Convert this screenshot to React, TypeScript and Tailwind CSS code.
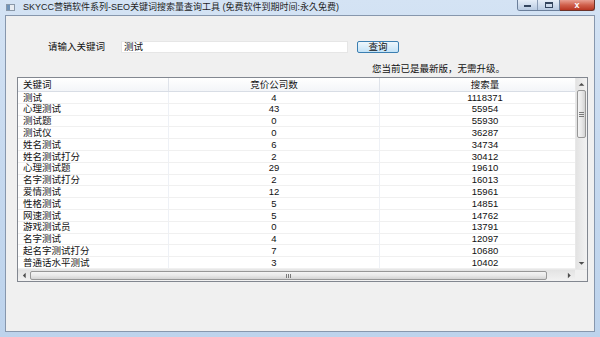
import React from 'react';

const rows: [string, string, string][] = [
  ['测试', '4', '1118371'],
  ['心理测试', '43', '55954'],
  ['测试题', '0', '55930'],
  ['测试仪', '0', '36287'],
  ['姓名测试', '6', '34734'],
  ['姓名测试打分', '2', '30412'],
  ['心理测试题', '29', '19610'],
  ['名字测试打分', '2', '16013'],
  ['爱情测试', '12', '15961'],
  ['性格测试', '5', '14851'],
  ['网速测试', '5', '14762'],
  ['游戏测试员', '0', '13791'],
  ['名字测试', '4', '12097'],
  ['起名字测试打分', '7', '10680'],
  ['普通话水平测试', '3', '10402'],
];

function Arrow({ dir }: { dir: 'up' | 'down' | 'left' | 'right' }) {
  const pts = {
    up: '0,4 3.5,0.5 7,4',
    down: '0,0.5 3.5,4 7,0.5',
    left: '4,0 0.5,3.5 4,7',
    right: '0.5,0 4,3.5 0.5,7',
  }[dir];
  const vertical = dir === 'up' || dir === 'down';
  return (
    <svg width={vertical ? 7 : 5} height={vertical ? 5 : 7} viewBox={vertical ? '0 0 7 5' : '0 0 5 7'}>
      <polygon points={pts} fill="#4d4d4d" transform={vertical ? 'scale(0.8) translate(0.9,0.6)' : 'scale(0.8) translate(0.6,0.9)'} />
    </svg>
  );
}

function VScrollbar() {
  return (
    <div className="w-[12px] flex flex-col bg-gradient-to-r from-[#e3e3e3] to-[#f2f2f2] border-l border-[#e8e8e8]">
      <div className="h-[12px] flex items-center justify-center">
        <Arrow dir="up" />
      </div>
      <div className="h-[48px] mx-[1px] rounded-[2px] border border-[#979797] bg-gradient-to-r from-[#f4f4f4] via-[#e9e9e9] to-[#d3d3d3] flex flex-col items-center justify-center gap-[1px]">
        <div className="w-[5px] h-px bg-[#7a7a7a]" />
        <div className="w-[5px] h-px bg-[#7a7a7a]" />
        <div className="w-[5px] h-px bg-[#7a7a7a]" />
      </div>
      <div className="flex-1" />
      <div className="h-[12px] flex items-center justify-center">
        <Arrow dir="down" />
      </div>
    </div>
  );
}

function HScrollbar() {
  return (
    <div className="h-[12px] flex bg-gradient-to-b from-[#e3e3e3] to-[#f2f2f2] border-t border-[#e8e8e8]">
      <div className="w-[12px] flex items-center justify-center">
        <Arrow dir="left" />
      </div>
      <div className="w-[517px] my-[1px] rounded-[2px] border border-[#979797] bg-gradient-to-b from-[#f4f4f4] via-[#e9e9e9] to-[#d3d3d3] flex items-center justify-center gap-[1px]">
        <div className="w-px h-[4px] bg-[#7a7a7a]" />
        <div className="w-px h-[4px] bg-[#7a7a7a]" />
        <div className="w-px h-[4px] bg-[#7a7a7a]" />
      </div>
      <div className="w-[16px]" />
      <div className="w-[12px] flex items-center justify-center">
        <Arrow dir="right" />
      </div>
      <div className="w-[12px] bg-[#f0f0f0]" />
    </div>
  );
}

function ResultList() {
  return (
    <div className="ml-[11px] mt-[3px] w-[571px] h-[205px] border border-[#828790] bg-white flex flex-col">
      <div className="h-[191px] flex">
        <div className="w-[557px] overflow-hidden">
          <div className="w-[572px]">
            <div className="h-[14px] flex items-center bg-gradient-to-b from-white to-[#f3f5f8] border-b border-[#d8dde5]">
              <div className="w-[150px] pl-[5px]">关键词</div>
              <div className="w-[211px] h-full flex items-center justify-center border-l border-[#dfe3ea]">竞价公司数</div>
              <div className="w-[211px] h-full flex items-center justify-center border-l border-[#dfe3ea]">搜索量</div>
            </div>
            {rows.map(([kw, n, vol]) => (
              <div key={kw} className="h-[11.8px] flex items-center border-b border-[#f0f0f0]">
                <div className="w-[150px] pl-[5px] whitespace-nowrap">{kw}</div>
                <div className="w-[211px] h-full flex items-center justify-center border-l border-[#eef1f6]">{n}</div>
                <div className="w-[211px] h-full flex items-center justify-center border-l border-[#eef1f6]">{vol}</div>
              </div>
            ))}
          </div>
        </div>
        <VScrollbar />
      </div>
      <HScrollbar />
    </div>
  );
}

function CaptionButtons() {
  return (
    <div className="ml-auto flex h-[11px]">
      <div className="flex border border-t-0 border-[#6b7f9b] rounded-bl-[3px] overflow-hidden">
        <div className="w-[20px] bg-gradient-to-b from-[#e6eef8] to-[#b9cbe2] flex items-end justify-center pb-[3px] border-r border-[#8a9cb5]">
          <div className="w-[7px] h-[2px] bg-[#33455e]" />
        </div>
        <div className="w-[21px] bg-gradient-to-b from-[#e6eef8] to-[#b9cbe2] flex items-center justify-center">
          <div className="w-[8px] h-[6px] border border-[#33455e] border-t-2" />
        </div>
      </div>
      <div className="w-[35px] border border-t-0 border-l-0 border-[#6b3329] rounded-br-[3px] bg-gradient-to-b from-[#e8a093] via-[#d0604c] to-[#b83521] flex items-center justify-center">
        <span className="text-white text-[9px] font-bold leading-none">x</span>
      </div>
    </div>
  );
}

export default function App() {
  return (
    <div className="w-[600px] h-[337px] bg-gradient-to-b from-[#d4e3f4] via-[#c6d9ef] to-[#bdd3ec] flex flex-col px-[5px] pb-[5px] font-['Liberation_Sans','Noto_Sans_CJK_SC',sans-serif] text-[9.5px] leading-none text-[#111]">
      <div className="h-[15px] flex items-start">
        <div className="ml-[1px] mt-[4px] w-[9px] h-[7px] border border-[#8a98a8] bg-[#e8ecf1] flex">
          <div className="w-[3px] h-full bg-[#6f93b8]" />
        </div>
        <div className="ml-[8px] mt-[3px] text-[9px] text-[#1e1e1e] whitespace-nowrap">
          SKYCC营销软件系列-SEO关键词搜索量查询工具 (免费软件到期时间:永久免费)
        </div>
        <CaptionButtons />
      </div>
      <div className="flex-1 bg-[#f0f0f0] border border-[#8797ad] flex flex-col">
        <div className="mt-[24px] h-[13px] flex items-center">
          <div className="ml-[42px] w-[73px]">请输入关键词</div>
          <div className="w-[227px] h-[12px] bg-white border border-[#e6e6e6] flex items-center pl-[2px]">测试</div>
          <div className="ml-[9px] w-[42px] h-[12px] rounded-[2px] border border-[#3c7fb1] bg-gradient-to-b from-[#eef7fd] to-[#c4e3f7] flex items-center justify-center">
            查询
          </div>
        </div>
        <div className="mt-[11px] h-[10px] flex items-center pl-[366px]">您当前已是最新版，无需升级。</div>
        <ResultList />
      </div>
    </div>
  );
}
